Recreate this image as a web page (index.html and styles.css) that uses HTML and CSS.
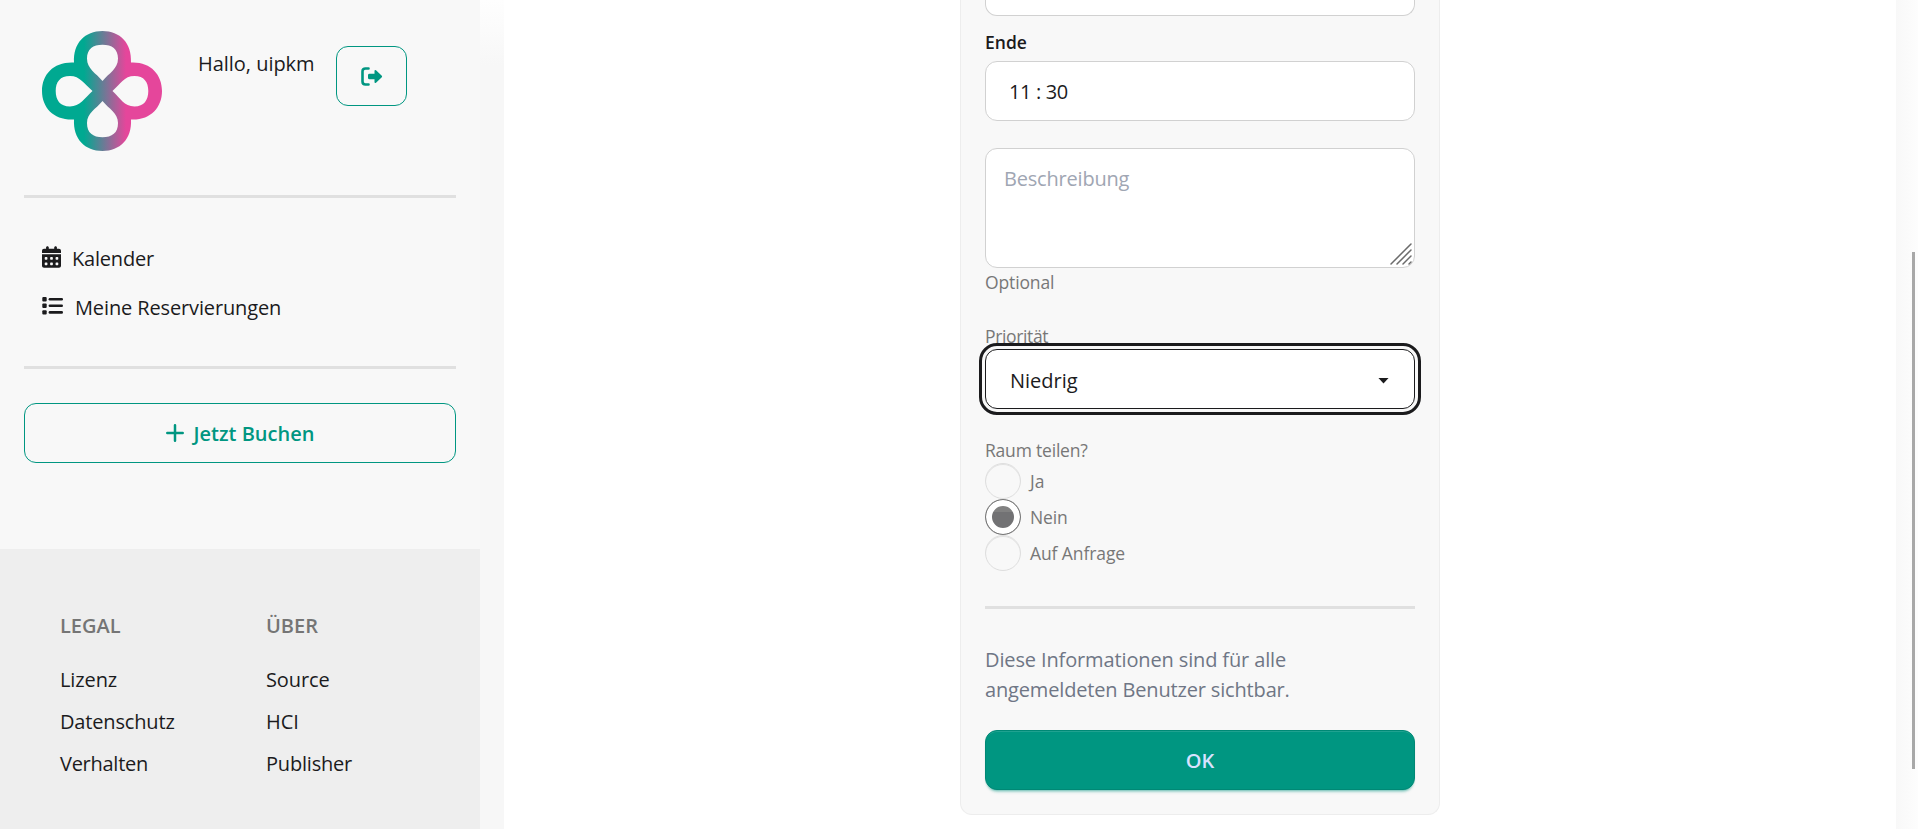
FILE: index.html
```
<!DOCTYPE html>
<html lang="de">
<head>
<meta charset="utf-8">
<title>Reservierung</title>
<link rel="stylesheet" href="styles.css">
</head>
<body>
<aside class="sidebar">
  <header class="profile">
    <svg class="logo" viewBox="0 0 120 120">
      <defs><linearGradient id="brand" gradientUnits="userSpaceOnUse" x1="42" y1="0" x2="84" y2="0"><stop offset="0" stop-color="#00a991"/><stop offset="1" stop-color="#e5469b"/></linearGradient></defs>
      <path fill="url(#brand)" fill-rule="evenodd" d="M32 31.500C31 12 43 0 60.500 0S90 12 89 31.500C108 30.500 120 43 120 60S108 89.500 89 88.500C90 108 78 120 60.500 120S31 108 32 88.500C12 89.500 0 77 0 60S12 30.500 32 31.500ZM60.500 50C67 42 76 38 76 27.500C76 18 70 13.700 60.500 13.700S45 18 45 27.500C45 38 54 42 60.500 50ZM60.500 70C67 78 76 82 76 92C76 102 70 106.200 60.500 106.200S45 102 45 92C45 82 54 78 60.500 70ZM50.500 60C42.500 53 38 45 28 45C18 45 13.700 51 13.700 60S18 75.500 28 75.500C38 75.500 42.500 67 50.500 60ZM70.500 60C78.500 53 82 45 92.500 45C102 45 106.300 51 106.300 60S102 75.500 92.500 75.500C82 75.500 78.500 67 70.500 60Z"/>
    </svg>
    <span class="hello">Hallo, uipkm</span>
    <button class="logout" aria-label="Logout">
      <svg width="22" height="19" viewBox="0 0 22 19"><path d="M7.500 1.500H4.500Q1.500 1.500 1.500 4.500V14.500Q1.500 17.500 4.500 17.500H7.500" fill="none" stroke="#009681" stroke-width="2.600" stroke-linecap="round"/><path fill="#009681" d="M8.500 6.800H13.500V4Q13.600 2.300 15 3.300L20.800 8.700Q21.500 9.500 20.800 10.300L15 15.700Q13.600 16.700 13.500 15V12.300H8.500Q7 12.300 7 10.800V8.200Q7 6.800 8.500 6.800Z"/></svg>
    </button>
  </header>
  <hr class="rule">
  <nav class="menu">
    <a class="item">
      <svg class="cal" width="19" height="22" viewBox="0 0 448 512"><path fill="#1b1b1d" d="M128 0c17.700 0 32 14.300 32 32v32h128V32c0-17.700 14.300-32 32-32s32 14.300 32 32v32h48c26.500 0 48 21.500 48 48v48H0v-48c0-26.500 21.500-48 48-48h48V32c0-17.700 14.300-32 32-32zM0 192h448v272c0 26.500-21.500 48-48 48H48c-26.500 0-48-21.500-48-48V192zm64 80v32c0 8.800 7.200 16 16 16h32c8.800 0 16-7.200 16-16v-32c0-8.800-7.200-16-16-16H80c-8.800 0-16 7.200-16 16zm128 0v32c0 8.800 7.200 16 16 16h32c8.800 0 16-7.200 16-16v-32c0-8.800-7.200-16-16-16h-32c-8.800 0-16 7.200-16 16zm144-16c-8.800 0-16 7.200-16 16v32c0 8.800 7.200 16 16 16h32c8.800 0 16-7.200 16-16v-32c0-8.800-7.200-16-16-16h-32zM64 400v32c0 8.800 7.200 16 16 16h32c8.800 0 16-7.200 16-16v-32c0-8.800-7.200-16-16-16H80c-8.800 0-16 7.200-16 16zm144-16c-8.800 0-16 7.200-16 16v32c0 8.800 7.200 16 16 16h32c8.800 0 16-7.200 16-16v-32c0-8.800-7.200-16-16-16h-32zm112 16v32c0 8.800 7.200 16 16 16h32c8.800 0 16-7.200 16-16v-32c0-8.800-7.200-16-16-16h-32c-8.800 0-16 7.200-16 16z"/></svg>
      <span class="t-kalender">Kalender</span>
    </a>
    <a class="item">
      <svg class="list" width="21" height="18" viewBox="0 0 21 18"><g fill="#1b1b1d"><rect x=".3" y="0" width="4.400" height="4.400" rx="1"/><rect x=".3" y="6.600" width="4.400" height="4.400" rx="1"/><rect x=".3" y="13.200" width="4.400" height="4.400" rx="1"/><rect x="6.600" y=".9" width="14.400" height="2.600" rx="1.300"/><rect x="6.600" y="7.500" width="14.400" height="2.600" rx="1.300"/><rect x="6.600" y="14.100" width="14.400" height="2.600" rx="1.300"/></g></svg>
      <span class="t-meine">Meine Reservierungen</span>
    </a>
  </nav>
  <hr class="rule">
  <button class="book">
    <svg width="18" height="18" viewBox="0 0 18 18"><path d="M9 1.300V16.700M1.300 9H16.700" stroke="#009681" stroke-width="2.500" stroke-linecap="round"/></svg>
    <span class="t-jetzt">Jetzt Buchen</span>
  </button>
  <footer class="foot">
    <div class="col legal"><b>LEGAL</b><a class="t-lizenz">Lizenz</a><a class="t-daten">Datenschutz</a><a class="t-verh">Verhalten</a></div>
    <div class="col"><b>ÜBER</b><a class="t-source">Source</a><a>HCI</a><a class="t-pub">Publisher</a></div>
  </footer>
</aside>
<div class="gutter"></div>
<main class="main">
  <form class="card">
    <div class="field start"></div>
    <label class="label end"><span>Ende</span></label>
    <div class="field time"><span class="t-time">11 : 30</span></div>
    <div class="field area"><span class="t-besch">Beschreibung</span>
      <svg class="grip" width="22" height="22" viewBox="0 0 22 22"><path d="M1 21L21 1M7 21L21 7M13 21L21 13M19 21L21 19" stroke="#6b6b6b" stroke-width="1.500" stroke-linecap="round"/></svg>
    </div>
    <div class="label optional"><span class="t-opt">Optional</span></div>
    <div class="label prio"><span class="t-prio">Priorität</span></div>
    <div class="field select"><span>Niedrig</span><i class="caret"></i></div>
    <div class="label share"><span class="t-raum">Raum teilen?</span></div>
    <label class="option"><i class="radio"></i><span>Ja</span></label>
    <label class="option"><i class="radio on"></i><span class="t-nein">Nein</span></label>
    <label class="option"><i class="radio"></i><span class="t-auf">Auf Anfrage</span></label>
    <hr class="rule split">
    <p class="info"><span class="t-info1">Diese Informationen sind für alle</span><br><span class="t-info2">angemeldeten Benutzer sichtbar.</span></p>
    <button class="ok" type="button"><span>OK</span></button>
  </form>
</main>
<div class="edge"><i class="thumb"></i></div>
</body>
</html>
```
FILE: styles.css
```
* { box-sizing: border-box; }
body { margin: 0; height: 829px; display: flex; overflow: hidden; background: #fff; color: #1b1b1d; font: 20px/30px "Open Sans", "Noto Sans", sans-serif; }
span, b, .col a { white-space: nowrap; }
button { font: inherit; padding: 0; background: none; cursor: pointer; }
svg { display: block; flex: none; }
.sidebar { width: 480px; height: 829px; flex: none; background: #f8f8f8; display: flex; flex-direction: column; }
.profile { height: 195px; padding-left: 42px; display: flex; align-items: flex-start; flex: none; }
.logo { width: 120px; height: 120px; margin-top: 31px; }
.hello { margin: 49px 0 0 36px; width: 138px; letter-spacing: -.03px; }
.logout { width: 71px; height: 60px; margin-top: 46px; border: 1px solid #009681; border-radius: 12px; display: flex; align-items: center; justify-content: center; }
.rule { width: 432px; height: 3px; flex: none; margin: 0 24px; border: 0; background: #e0e0e0; }
.menu { height: 168px; padding: 36px 0 0 42px; flex: none; }
.item { display: flex; height: 49px; padding-top: 10px; }
.cal { margin-right: 11px; margin-top: 2px; }
.list { margin-right: 12px; margin-top: 4px; }
.book { width: 432px; height: 60px; flex: none; margin: 34px 24px 0; border: 1px solid #009681; border-radius: 12px; color: #009681; font-weight: 600; display: flex; align-items: center; justify-content: center; gap: 10px; }
.t-jetzt { padding-top: 2px; }
.foot { margin-top: 86px; height: 280px; background: #eee; padding: 62px 60px 0; display: flex; }
.col { display: flex; flex-direction: column; gap: 12px; }
.legal { width: 206px; }
.col b { font-weight: 600; color: #757575; margin-bottom: 12px; }
.gutter { width: 24px; flex: none; background: linear-gradient(#fefefe 0, #fbfbfb 30px, #f7f7f7 65px); }
.main { width: 1392px; flex: none; display: flex; justify-content: center; align-items: flex-start; }
.edge { width: 22px; height: 829px; flex: none; background: linear-gradient(90deg, #f8f8f8, #fdfdfd); padding: 252px 0 0 16px; }
.thumb { display: block; width: 3px; height: 517px; background: #a8a8a8; }
.card { width: 480px; height: 815px; margin: 0; padding: 0 24px; border: 1px solid #ededed; border-top: 0; border-radius: 0 0 12px 12px; background: #f8f8f8; display: flex; flex-direction: column; flex: none; }
.field { width: 430px; height: 60px; flex: none; border: 1px solid #d1d1d1; border-radius: 12px; background: #fff; display: flex; align-items: center; }
.start { height: 16px; border-top: 0; border-radius: 0 0 12px 12px; }
.label { height: 26px; flex: none; font-size: 17.5px; line-height: 26px; color: #777; }
.end { margin: 13px 0 6px; font-weight: 600; color: #1b1b1d; }
.time { padding: 2px 0 0 23px; }
.area { position: relative; height: 120px; margin-top: 27px; padding: 15px 18px; align-items: flex-start; color: #9fa6b3; }
.grip { position: absolute; right: 2px; bottom: 2px; }
.optional { margin-top: 1px; }
.prio { margin-top: 28px; }
.select { border-color: #1b1b1d; outline: 3px solid #1b1b1d; outline-offset: 3px; padding: 3px 25px 0 24px; justify-content: space-between; }
.caret { width: 11px; height: 6px; background: #1b1b1d; clip-path: polygon(0 0, 100% 0, 50% 100%); }
.share { margin-top: 28px; }
.option { display: flex; height: 36px; flex: none; align-items: center; font-size: 17.5px; line-height: 26px; color: #777; }
.radio { width: 36px; height: 36px; margin-right: 9px; border: 1px solid #dedede; border-radius: 50%; box-shadow: inset 0 1px 0 #e2e2e2; }
.radio.on { border-color: #777; background: linear-gradient(#818181 0 12px, #727274 12px) center / 100% 100%; box-shadow: inset 0 0 0 6px #fff; }
.split { width: 430px; margin: 35px 0 0; }
.info { margin: 36px 0 0; color: #6f7685; }
.ok { width: 430px; height: 60px; flex: none; margin-top: 25px; padding-top: 2px; border: 1px solid #008875; border-radius: 12px; background: #009681; color: #d8e2ff; font-weight: 600; box-shadow: 0 4px 3px -2px rgba(0,150,129,.3), 0 2px 2px -1px rgba(0,150,129,.3), inset 0 2px 0 -1px rgba(255,255,255,.12); }
/* optical tracking */
.t-kalender, .t-besch, .t-raum, .t-pub { letter-spacing: -.2px; }
.t-meine, .t-opt, .t-info1 { letter-spacing: -.13px; }
.t-info2, .t-daten { letter-spacing: -.16px; }
.t-verh { letter-spacing: -.27px; }
.t-lizenz, .t-source, .t-nein, .t-auf { letter-spacing: -.1px; }
.t-time, .t-prio { letter-spacing: -.35px; }
```
